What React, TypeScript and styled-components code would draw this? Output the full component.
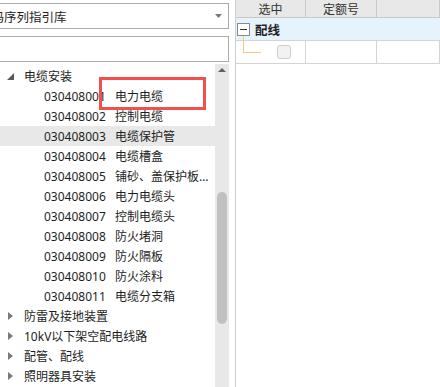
import React from "react";
import styled, { createGlobalStyle } from "styled-components";

const GlobalStyle = createGlobalStyle`
  body {
    margin: 0;
    background: #ffffff;
    font-family: "Noto Sans", "Noto Sans CJK SC", sans-serif;
    font-size: 12px;
    color: #1e1e1e;
  }
`;

const Page = styled.div`
  position: relative;
  display: flex;
  width: 440px;
  height: 387px;
  overflow: hidden;
`;

const LeftPanel = styled.div`
  width: 229px;
  flex-shrink: 0;
  display: flex;
  flex-direction: column;
`;

const SelectBox = styled.div`
  margin: 3px 0 0 -30px;
  height: 26px;
  box-sizing: border-box;
  border: 1px solid #ababab;
  display: flex;
  align-items: center;
  padding: 0 6px 0 8px;
  font-size: 12.5px;
  white-space: nowrap;
`;

const SelectText = styled.span`
  flex: 1;
`;

const SearchBox = styled.div`
  margin: 7px 0 0 -30px;
  height: 26px;
  box-sizing: border-box;
  border: 1px solid #ababab;
`;

const TreeArea = styled.div`
  flex: 1;
  display: flex;
  margin-top: 2px;
  min-height: 0;
`;

const TreeList = styled.div`
  flex: 1;
  padding-top: 2px;
`;

const TreeRow = styled.div<{ $selected?: boolean }>`
  height: 20px;
  display: flex;
  align-items: center;
  background: ${(p) => (p.$selected ? "#e8e8e8" : "transparent")};
  white-space: nowrap;
`;

const Toggle = styled.span`
  width: 24px;
  display: flex;
  justify-content: center;
  padding-right: 4px;
  box-sizing: border-box;
`;

const Code = styled.span`
  width: 71px;
  padding-left: 44px;
`;

const Name = styled.span`
  overflow: hidden;
  text-overflow: ellipsis;
  max-width: 96px;
`;

const ScrollBar = styled.div`
  width: 14px;
  background: #e8e8e8;
  display: flex;
  flex-direction: column;
  align-items: center;
`;

const ScrollArrow = styled.div`
  margin-top: 4px;
  width: 0;
  height: 0;
  border-left: 4px solid transparent;
  border-right: 4px solid transparent;
  border-bottom: 4px solid #606060;
`;

const ScrollThumb = styled.div`
  margin-top: 120px;
  width: 10px;
  height: 132px;
  border-radius: 5px;
  background: #c1c1c1;
`;

const RightPanel = styled.div`
  flex: 1;
  margin-left: 6px;
  border-left: 1px solid #cfcfcf;
`;

const Grid = styled.div`
  display: grid;
  grid-template-columns: 70px 71px 1fr;
`;

const HeadCell = styled.div`
  height: 18px;
  box-sizing: border-box;
  background: #e8e8e8;
  border-right: 1px solid #c9c9c9;
  border-bottom: 1px solid #c9c9c9;
  display: flex;
  align-items: center;
  justify-content: center;
  font-size: 12px;
  color: #333;
`;

const GroupRow = styled.div`
  grid-column: 1 / 4;
  height: 23px;
  box-sizing: border-box;
  background: #e5f3fd;
  border-bottom: 1px solid #d4d4d4;
  display: flex;
  align-items: center;
  padding-left: 1px;
  gap: 5px;
  font-weight: bold;
  font-size: 12.5px;
`;

const MinusBox = styled.span`
  width: 13px;
  height: 13px;
  box-sizing: border-box;
  border: 1px solid #8a8a8a;
  background: #fff;
  display: flex;
  align-items: center;
  justify-content: center;
  &::after {
    content: "";
    width: 7px;
    height: 1px;
    background: #333;
  }
`;

const Cell = styled.div`
  position: relative;
  height: 23px;
  box-sizing: border-box;
  border-right: 1px solid #d4d4d4;
  border-bottom: 1px solid #d4d4d4;
  display: flex;
  align-items: center;
`;

const TreeLine = styled.span`
  position: absolute;
  left: 7px;
  top: -5px;
  width: 17px;
  height: 16px;
  border-left: 1px solid #ffc870;
  border-bottom: 1px solid #ffc870;
`;

const CheckBox = styled.span`
  margin-left: 41px;
  width: 14px;
  height: 14px;
  box-sizing: border-box;
  border: 1px solid #cdcdcd;
  border-radius: 3px;
  background: #f2f2f2;
`;

const Highlight = styled.div`
  position: absolute;
  left: 99px;
  top: 77px;
  width: 107px;
  height: 33px;
  box-sizing: border-box;
  border: 3px solid #f2504f;
`;

const Expanded = () => (
  <svg width="7" height="7" viewBox="0 0 7 7">
    <polygon points="7,0 7,7 0,7" fill="#595959" />
  </svg>
);

const Collapsed = () => (
  <svg width="5" height="8" viewBox="0 0 5 8">
    <polygon points="0,0 5,4 0,8" fill="#7a7a7a" />
  </svg>
);

const items = [
  ["030408001", "电力电缆"],
  ["030408002", "控制电缆"],
  ["030408003", "电缆保护管"],
  ["030408004", "电缆槽盒"],
  ["030408005", "铺砂、盖保护板(砖)"],
  ["030408006", "电力电缆头"],
  ["030408007", "控制电缆头"],
  ["030408008", "防火堵洞"],
  ["030408009", "防火隔板"],
  ["030408010", "防火涂料"],
  ["030408011", "电缆分支箱"],
];

const groups = ["防雷及接地装置", "10kV以下架空配电线路", "配管、配线", "照明器具安装"];

function App() {
  return (
    <Page>
      <GlobalStyle />
      <LeftPanel>
        <SelectBox>
          <SelectText>编码序列指引库</SelectText>
          <svg width="7" height="4" viewBox="0 0 7 4">
            <polygon points="0,0 7,0 3.5,4" fill="#7a7a7a" />
          </svg>
        </SelectBox>
        <SearchBox />
        <TreeArea>
          <TreeList>
            <TreeRow>
              <Toggle>
                <Expanded />
              </Toggle>
              电缆安装
            </TreeRow>
            {items.map(([code, name]) => (
              <TreeRow key={code} $selected={code === "030408003"}>
                <Code>{code}</Code>
                <Name>{name}</Name>
              </TreeRow>
            ))}
            {groups.map((g) => (
              <TreeRow key={g}>
                <Toggle>
                  <Collapsed />
                </Toggle>
                {g}
              </TreeRow>
            ))}
          </TreeList>
          <ScrollBar>
            <ScrollArrow />
            <ScrollThumb />
          </ScrollBar>
        </TreeArea>
      </LeftPanel>
      <RightPanel>
        <Grid>
          <HeadCell>选中</HeadCell>
          <HeadCell>定额号</HeadCell>
          <HeadCell />
          <GroupRow>
            <MinusBox />
            配线
          </GroupRow>
          <Cell>
            <TreeLine />
            <CheckBox />
          </Cell>
          <Cell />
          <Cell />
        </Grid>
      </RightPanel>
      <Highlight />
    </Page>
  );
}

export default App;
